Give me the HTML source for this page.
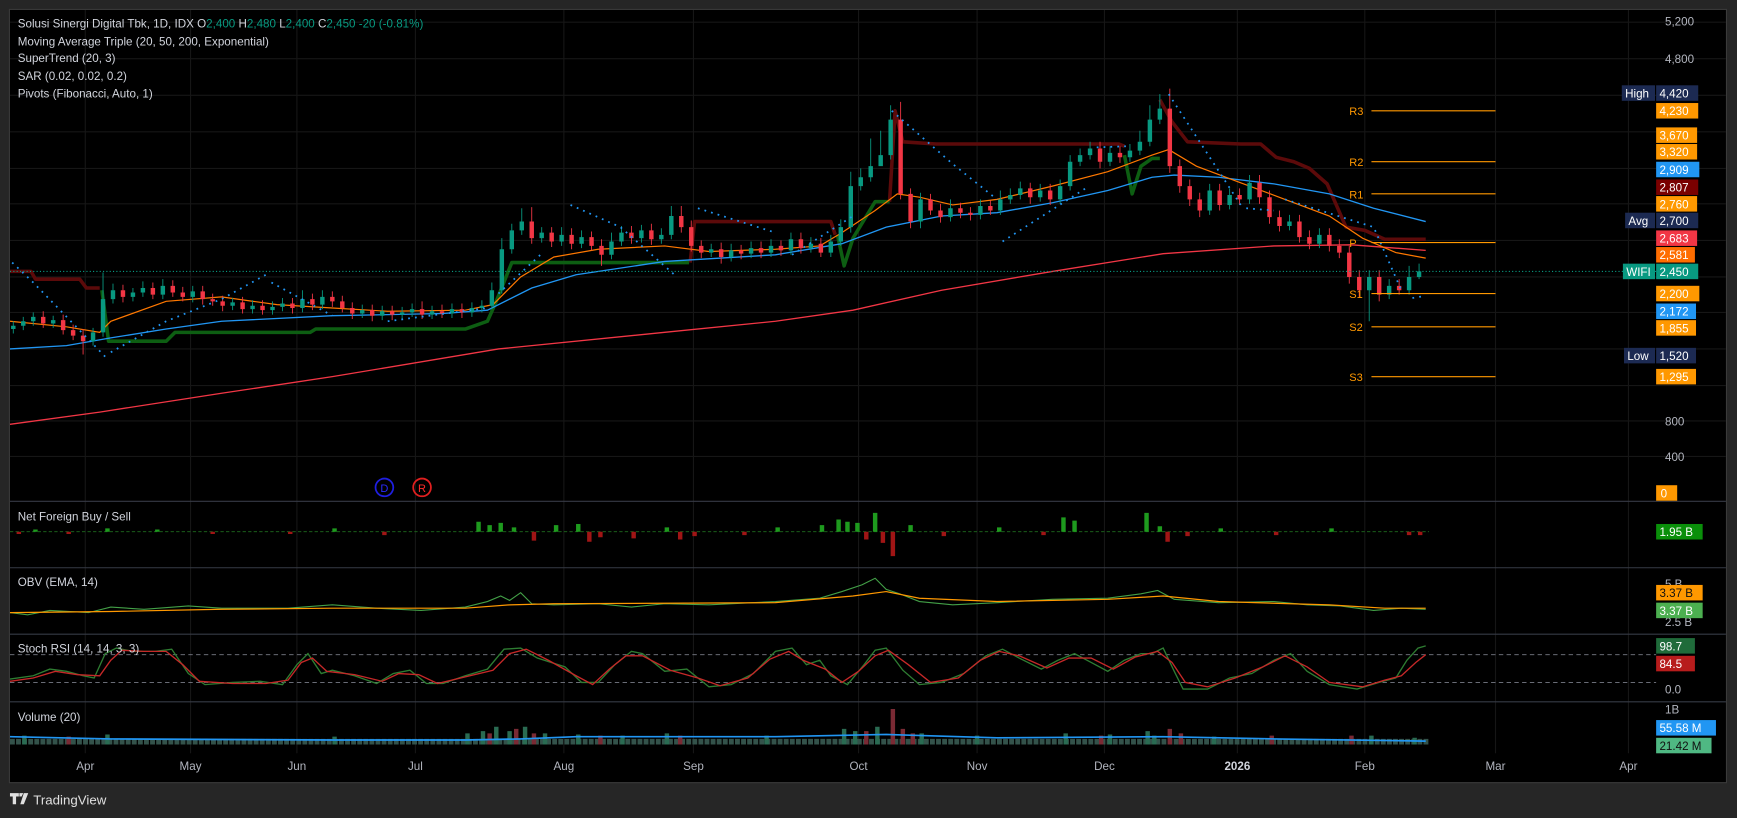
<!DOCTYPE html>
<html><head><meta charset="utf-8">
<style>
html,body{margin:0;padding:0;background:#262626;overflow:hidden}
svg{display:block}
text{font-family:"Liberation Sans",sans-serif}
</style></head>
<body>
<svg width="1737" height="818" viewBox="0 0 1568 738.4" preserveAspectRatio="none" xmlns="http://www.w3.org/2000/svg">
<rect x="0" y="0" width="1568" height="739" fill="#262626"/>
<rect x="8.5" y="8.5" width="1550" height="698" fill="#000" stroke="#3a3a3a" stroke-width="1"/>
<g stroke="#161616" stroke-width="1">
<path d="M77 9V680M172 9V680M268 9V680M375 9V680M509 9V680M626 9V680M775 9V680M882 9V680M997 9V680M1117 9V680M1232 9V680M1350 9V680M1470 9V680"/>
<path d="M9 20H1558M9 53H1558M9 86H1558M9 119H1558M9 152H1558M9 184H1558M9 217H1558M9 250H1558M9 282H1558M9 315H1558M9 348H1558M9 380H1558M9 412H1558"/>
</g>

<!-- EMA200 -->
<polyline points="9,383 90,372 200,355 300,340 450,315 600,300 700,290 770,280 850,262 950,245 1050,229 1150,222 1220,221 1287,226" fill="none" stroke="#f23645" stroke-width="1.2"/>
<!-- Supertrend -->
<g fill="none" stroke-width="3.2" stroke-linejoin="round">
<polyline stroke="#5c0a0a" points="9,245 28,245 32,252 72,252 78,260 90,260"/>
<polyline stroke="#5c0a0a" points="623,237 627,200 750,200 754,212"/>
<polyline stroke="#5c0a0a" points="803,182 808,100 815,128 845,130 1010,130 1015,132"/>
<polyline stroke="#5c0a0a" points="1047,90 1058,110 1072,128 1120,130 1138,130 1152,142 1168,146 1182,152 1198,166 1215,205 1232,208 1250,216 1287,216"/>
<polyline stroke="#0d5e12" points="92,262 98,308 150,308 158,300 280,300 285,297 420,297 440,290 448,272 462,237 622,237"/>
<polyline stroke="#0d5e12" points="756,212 762,240 770,215 790,182 803,182"/>
<polyline stroke="#0d5e12" points="1015,140 1022,175 1030,150 1040,143 1047,143"/>
</g>
<!-- EMAs -->
<polyline fill="none" stroke="#2196f3" stroke-width="1.2" points="9,315 60,312 100,305 150,297 200,290 300,285 400,283 440,280 480,260 520,248 600,236 700,230 760,220 800,205 850,195 900,192 950,183 1000,172 1040,160 1060,158 1100,160 1150,166 1200,175 1240,188 1287,200"/>
<polyline fill="none" stroke="#ff7800" stroke-width="1.1" points="9,290 60,295 90,300 100,290 150,272 200,268 250,275 300,278 350,281 420,280 445,275 470,250 500,232 540,225 600,222 640,227 700,225 740,222 760,210 790,190 810,175 830,178 860,185 900,180 950,168 1000,155 1040,140 1055,135 1080,150 1120,165 1160,180 1200,195 1230,215 1260,228 1287,233"/>

<!-- candles green -->
<g fill="#089981" stroke="#089981" stroke-width="0.8">
<path stroke="none" d="M10 294h4v3h-4zM19 290h4v4h-4zM28 286h4v4h-4zM46 289h4v3h-4zM82 300h4v8h-4zM91 270h4v30h-4zM100 262h4v8h-4zM118 264h4v4h-4zM127 260h4v4h-4zM145 258h4v8h-4zM172 263h4v5h-4zM208 273h4v3h-4zM226 276h4v3h-4zM244 277h4v3h-4zM253 274h4v3h-4zM271 270h4v8h-4zM289 268h4v7h-4zM325 280h4v3h-4zM343 281h4v4h-4zM361 282h4v2h-4zM370 279h4v3h-4zM388 281h4v3h-4zM406 279h4v4h-4zM424 278h4v4h-4zM433 276h4v2h-4zM442 262h4v14h-4zM451 225h4v37h-4zM460 208h4v17h-4zM469 200h4v8h-4zM487 210h4v5h-4zM505 212h4v6h-4zM523 214h4v6h-4zM550 218h4v12h-4zM559 210h4v8h-4zM577 208h4v7h-4zM595 212h4v4h-4zM604 195h4v17h-4zM640 225h4v3h-4zM658 226h4v6h-4zM676 224h4v5h-4zM694 222h4v6h-4zM712 216h4v10h-4zM730 220h4v4h-4zM748 218h4v10h-4zM757 205h4v13h-4zM766 168h4v37h-4zM775 160h4v8h-4zM784 150h4v10h-4zM793 140h4v10h-4zM802 108h4v32h-4zM829 180h4v20h-4zM856 188h4v8h-4zM883 186h4v8h-4zM901 180h4v10h-4zM910 176h4v4h-4zM919 170h4v6h-4zM937 172h4v6h-4zM955 168h4v12h-4zM964 146h4v22h-4zM973 140h4v6h-4zM982 134h4v6h-4zM1000 138h4v8h-4zM1018 136h4v6h-4zM1027 128h4v8h-4zM1036 108h4v20h-4zM1045 98h4v10h-4zM1090 172h4v18h-4zM1108 176h4v9h-4zM1126 165h4v15h-4zM1162 200h4v4h-4zM1189 212h4v8h-4zM1234 250h4v12h-4zM1252 258h4v8h-4zM1270 250h4v12h-4zM1279 245h4v5h-4z"/>
<path fill="none" d="M12 290V301M21 286V298M30 282V294M48 285V296M84 296V312M93 246V304M102 256V274M120 260V272M129 254V268M147 252V270M174 258V273M210 269V280M228 271V283M246 272V284M255 269V281M273 262V282M291 262V279M327 275V287M345 276V289M363 277V288M372 274V286M390 276V288M408 274V287M426 273V286M435 271V282M444 255V279M453 215V265M462 202V229M471 188V212M489 205V219M507 205V222M525 208V224M552 210V234M561 204V222M579 203V219M597 206V220M606 186V216M642 220V232M660 220V236M678 218V233M696 216V232M714 210V230M732 214V228M750 212V232M759 198V222M768 155V210M777 152V172M786 125V164M795 118V145M804 95V144M831 174V206M858 180V200M885 180V198M903 172V194M912 170V184M921 164V180M939 166V182M957 162V184M966 140V172M975 134V150M984 128V144M1002 132V150M1020 130V146M1029 118V140M1038 95V132M1047 85V112M1092 166V194M1110 170V189M1128 158V184M1164 194V208M1191 206V224M1236 244V290M1254 252V270M1272 240V266M1281 238V252"/>
</g>
<!-- candles red -->
<g fill="#f23645" stroke="#f23645" stroke-width="0.8">
<path stroke="none" d="M37 286h4v6h-4zM55 289h4v9h-4zM64 298h4v5h-4zM73 303h4v5h-4zM109 262h4v6h-4zM136 260h4v6h-4zM154 258h4v6h-4zM163 264h4v4h-4zM181 263h4v7h-4zM190 270h4v2h-4zM199 272h4v4h-4zM217 273h4v6h-4zM235 276h4v4h-4zM262 274h4v4h-4zM280 270h4v5h-4zM298 268h4v4h-4zM307 272h4v6h-4zM316 278h4v5h-4zM334 280h4v5h-4zM352 281h4v3h-4zM379 279h4v5h-4zM397 281h4v2h-4zM415 279h4v3h-4zM478 200h4v15h-4zM496 210h4v8h-4zM514 212h4v8h-4zM532 214h4v8h-4zM541 222h4v8h-4zM568 210h4v5h-4zM586 208h4v8h-4zM613 195h4v10h-4zM622 205h4v17h-4zM631 222h4v6h-4zM649 225h4v7h-4zM667 226h4v3h-4zM685 224h4v4h-4zM703 222h4v4h-4zM721 216h4v8h-4zM739 220h4v8h-4zM811 108h4v67h-4zM820 175h4v25h-4zM838 180h4v10h-4zM847 190h4v6h-4zM865 188h4v4h-4zM874 192h4v2h-4zM892 186h4v4h-4zM928 170h4v8h-4zM946 172h4v8h-4zM991 134h4v12h-4zM1009 138h4v4h-4zM1054 98h4v52h-4zM1063 150h4v18h-4zM1072 168h4v12h-4zM1081 180h4v10h-4zM1099 172h4v13h-4zM1117 176h4v4h-4zM1135 165h4v13h-4zM1144 178h4v18h-4zM1153 196h4v8h-4zM1171 200h4v14h-4zM1180 214h4v6h-4zM1198 212h4v10h-4zM1207 222h4v6h-4zM1216 228h4v22h-4zM1225 250h4v12h-4zM1243 250h4v16h-4zM1261 258h4v4h-4z"/>
<path fill="none" d="M39 281V296M57 284V302M66 293V307M75 297V320M111 257V273M138 255V270M156 253V268M165 259V272M183 258V275M192 265V276M201 267V281M219 268V283M237 271V284M264 269V283M282 265V280M300 263V277M309 267V282M318 273V288M336 275V290M354 276V289M381 272V288M399 275V287M417 274V287M480 187V220M498 205V223M516 206V225M534 209V226M543 216V240M570 204V220M588 202V221M615 186V210M624 199V227M633 217V233M651 219V238M669 221V234M687 218V233M705 217V231M723 210V229M741 215V232M813 92V180M822 170V206M840 175V194M849 184V201M867 183V197M876 187V199M894 181V194M930 165V184M948 166V185M993 128V152M1011 132V147M1056 80V156M1065 144V174M1074 162V186M1083 174V196M1101 166V190M1119 170V185M1137 158V184M1146 172V202M1155 190V209M1173 194V219M1182 208V225M1200 206V227M1209 216V233M1218 222V256M1227 244V268M1245 244V272M1263 252V266"/>
</g>

<!-- SAR dots -->
<g fill="none" stroke="#2196f3" stroke-width="1.6" stroke-dasharray="1.6,4.6">
<polyline points="11,237 30,255 95,322"/>
<polyline points="100,318 150,290 200,270 240,248"/>
<polyline points="245,255 300,285"/>
<polyline points="350,290 440,278"/>
<polyline points="450,265 490,228"/>
<polyline points="515,185 560,205 610,249"/>
<polyline points="630,188 700,210"/>
<polyline points="715,230 770,195"/>
<polyline points="805,100 860,148 900,180"/>
<polyline points="905,218 980,170"/>
<polyline points="990,133 1018,132"/>
<polyline points="1055,85 1120,185"/>
<polyline points="1125,188 1150,190"/>
<polyline points="1160,180 1240,205 1265,262"/>
<polyline points="1275,269 1287,267"/>
</g>

<!-- pivots -->
<g stroke="#ff9800" stroke-width="1">
<path d="M1238 100H1350M1238 146H1350M1238 175H1350M1238 219H1350M1238 265H1350M1238 295H1350M1238 340H1350"/>
</g>
<g font-size="10" fill="#ff9800">
<text x="1218" y="104">R3</text><text x="1218" y="150">R2</text><text x="1218" y="179">R1</text><text x="1218" y="223">P</text><text x="1218" y="269">S1</text><text x="1218" y="299">S2</text><text x="1218" y="344">S3</text>
</g>
<line x1="9" y1="245" x2="1495" y2="245" stroke="#089981" stroke-width="1" stroke-dasharray="1,2"/>

<!-- NFBS -->
<line x1="9" y1="480" x2="1290" y2="480" stroke="#1d6b1d" stroke-width="0.8" stroke-dasharray="3,2"/>
<g fill="#1e9a1e">
<path d="M30 478h4v2h-4zM95 477h4v3h-4zM140 478h4v2h-4zM300 477h4v3h-4zM430 471h4v9h-4zM440 474h4v6h-4zM450 472h4v8h-4zM462 476h4v4h-4zM500 474h4v6h-4zM520 473h4v7h-4zM600 476h4v4h-4zM700 476h4v4h-4zM740 474h4v6h-4zM755 469h4v11h-4zM763 471h4v9h-4zM772 472h4v8h-4zM788 463h4v17h-4zM820 474h4v6h-4zM900 476h4v4h-4zM958 467h4v13h-4zM968 470h4v10h-4zM1033 463h4v17h-4zM1045 475h4v5h-4zM1100 477h4v3h-4zM1200 477h4v3h-4z"/>
</g>
<g fill="#a01515">
<path d="M15 480h4v2h-4zM60 480h4v2h-4zM190 480h4v2h-4zM260 480h4v2h-4zM345 480h4v3h-4zM480 480h4v8h-4zM530 480h4v9h-4zM540 480h4v5h-4zM570 480h4v6h-4zM612 480h4v7h-4zM625 480h4v4h-4zM670 480h4v3h-4zM780 480h4v7h-4zM795 480h4v10h-4zM804 480h4v22h-4zM850 480h4v4h-4zM940 480h4v3h-4zM1052 480h4v9h-4zM1070 480h4v4h-4zM1150 480h4v3h-4zM1270 480h4v3h-4zM1280 480h4v3h-4z"/>
</g>

<!-- OBV -->
<polyline fill="none" stroke="#43a047" stroke-width="1" points="9,553 25,555 45,551 80,553 100,548 130,550 170,547 200,549 260,549 300,546 340,549 380,551 420,548 440,543 452,538 460,542 470,535 480,545 500,546 540,545 570,548 600,545 640,546 700,543 740,540 760,534 778,528 790,522 800,532 812,536 830,543 860,546 900,544 950,541 1000,540 1030,536 1045,533 1060,541 1100,544 1150,543 1180,546 1210,547 1240,551 1265,549 1287,550"/>
<polyline fill="none" stroke="#ff9800" stroke-width="1.1" points="9,553 100,552 200,550 300,549 420,549 460,546 500,545 700,544 770,538 800,534 830,540 900,543 1000,541 1050,538 1100,543 1200,546 1250,549 1287,549"/>

<!-- Stoch -->
<g stroke="#787b86" stroke-width="0.8" stroke-dasharray="4,3"><path d="M9 591H1495M9 616H1495"/></g>
<polyline fill="none" stroke="#2e7d32" stroke-width="1.2" points="9,613 30,610 45,604 60,606 75,610 85,612 95,590 105,585 120,588 140,588 155,586 170,608 185,618 210,616 235,615 255,618 268,600 278,590 290,608 300,605 320,610 340,617 355,608 370,605 385,617 400,617 420,610 440,604 455,586 470,585 485,594 510,602 525,616 540,616 555,600 570,588 580,590 600,606 620,604 640,620 660,618 680,608 700,588 715,585 728,600 740,596 750,610 765,618 780,600 790,587 800,585 815,605 830,618 850,616 870,608 890,592 905,586 920,594 940,604 955,596 970,590 985,598 1000,606 1015,596 1030,590 1040,590 1050,585 1060,606 1068,622 1090,622 1110,612 1130,608 1150,596 1165,590 1180,606 1200,618 1225,622 1245,616 1260,612 1270,596 1280,585 1287,583"/>
<polyline fill="none" stroke="#c62828" stroke-width="1.2" points="9,615 30,612 50,606 70,609 90,610 100,596 110,587 130,588 150,588 165,600 180,615 210,617 240,617 260,614 272,598 282,594 295,606 320,609 345,615 360,608 378,609 395,617 420,611 445,605 460,590 475,586 495,596 520,610 535,618 550,604 565,592 580,592 605,605 630,612 650,619 675,612 695,595 712,588 725,596 745,604 760,616 775,606 790,592 802,587 820,600 840,616 865,612 885,596 902,588 920,592 945,603 965,594 985,594 1005,604 1025,593 1045,588 1058,598 1070,616 1090,620 1115,612 1140,602 1160,592 1180,602 1200,616 1230,620 1250,614 1265,610 1278,598 1287,591"/>

<!-- Volume -->
<line x1="9" y1="669.5" x2="1290" y2="669.5" stroke="#33524a" stroke-width="5" stroke-dasharray="4.4,1.1"/>
<g fill="#2a6b52">
<path d="M20 664h4v8h-4zM95 663h4v9h-4zM300 665h4v7h-4zM420 662h4v10h-4zM434 660h4v12h-4zM446 656h4v16h-4zM458 660h4v12h-4zM472 656h4v16h-4zM490 662h4v10h-4zM520 663h4v9h-4zM560 664h4v8h-4zM600 662h4v10h-4zM690 664h4v8h-4zM760 658h4v14h-4zM770 660h4v12h-4zM790 656h4v16h-4zM830 662h4v10h-4zM880 664h4v8h-4zM960 662h4v10h-4zM1000 663h4v9h-4zM1034 660h4v12h-4zM1040 664h4v8h-4zM1094 665h4v7h-4zM1236 664h4v8h-4zM1275 666h4v6h-4z"/>
</g>
<g fill="#7a2a34">
<path d="M60 665h4v7h-4zM440 662h4v10h-4zM464 658h4v14h-4zM480 662h4v10h-4zM540 664h4v8h-4zM612 664h4v8h-4zM780 660h4v12h-4zM804 640h4v32h-4zM813 658h4v14h-4zM822 662h4v10h-4zM992 664h4v8h-4zM1054 658h4v14h-4zM1064 662h4v10h-4zM1146 664h4v8h-4zM1218 664h4v8h-4z"/>
</g>
<polyline fill="none" stroke="#2196f3" stroke-width="1.5" points="9,665 100,667 300,668 420,668 470,667 520,665 700,665 800,663 900,666 1050,665 1150,667 1287,669"/>

<!-- pane separators -->
<g stroke="#363a45" stroke-width="1">
<path d="M9 452.5H1558M9 512.5H1558M9 572.5H1558M9 633.5H1558"/>
</g>
<!-- legend -->
<g font-size="10.5" fill="#d1d4dc">
<text x="16" y="25">Solusi Sinergi Digital Tbk, 1D, IDX  O<tspan fill="#089981">2,400</tspan>  H<tspan fill="#089981">2,480</tspan>  L<tspan fill="#089981">2,400</tspan>  C<tspan fill="#089981">2,450  -20 (-0.81%)</tspan></text>
<text x="16" y="41">Moving Average Triple (20, 50, 200, Exponential)</text>
<text x="16" y="56">SuperTrend (20, 3)</text>
<text x="16" y="72">SAR (0.02, 0.02, 0.2)</text>
<text x="16" y="88">Pivots (Fibonacci, Auto, 1)</text>
<text x="16" y="470">Net Foreign Buy / Sell</text>
<text x="16" y="529">OBV (EMA, 14)</text>
<text x="16" y="589">Stoch RSI (14, 14, 3, 3)</text>
<text x="16" y="651">Volume (20)</text>
</g>
<g font-size="10.5" fill="#b2b5be">
<text x="1503" y="23">5,200</text><text x="1503" y="57">4,800</text><text x="1503" y="384">800</text><text x="1503" y="416">400</text>
<text x="1503" y="531">5 B</text><text x="1503" y="565">2.5 B</text><text x="1503" y="626">0.0</text><text x="1503" y="644">1B</text>
</g>
<g font-size="10.5" fill="#b2b5be" text-anchor="middle">
<text x="77" y="695">Apr</text><text x="172" y="695">May</text><text x="268" y="695">Jun</text><text x="375" y="695">Jul</text><text x="509" y="695">Aug</text><text x="626" y="695">Sep</text><text x="775" y="695">Oct</text><text x="882" y="695">Nov</text><text x="997" y="695">Dec</text><text x="1117" y="695" font-weight="bold" fill="#d1d4dc">2026</text><text x="1232" y="695">Feb</text><text x="1350" y="695">Mar</text><text x="1470" y="695">Apr</text>
</g>

<!-- badges -->
<g>
<rect x="1464" y="77" width="30" height="14" fill="#1c2a52"/><rect x="1495" y="77" width="38" height="14" fill="#1c2a52"/>
<rect x="1495" y="93" width="38" height="14" fill="#ff9800"/>
<rect x="1495" y="115" width="37" height="14" fill="#ff9800"/><rect x="1495" y="130" width="37" height="14" fill="#ff9800"/>
<rect x="1495" y="146" width="39" height="14" fill="#2196f3"/><rect x="1495" y="162" width="38" height="14" fill="#7a0000"/>
<rect x="1495" y="177" width="37" height="14" fill="#ff9800"/>
<rect x="1467" y="192" width="27" height="14" fill="#1c2a52"/><rect x="1495" y="192" width="38" height="14" fill="#1c2a52"/>
<rect x="1495" y="208" width="37" height="14" fill="#f23645"/><rect x="1495" y="223" width="35" height="14" fill="#ff6d00"/>
<rect x="1465" y="238" width="29" height="14" fill="#089981"/><rect x="1495" y="238" width="38" height="14" fill="#089981"/>
<rect x="1495" y="258" width="39" height="14" fill="#ff9800"/><rect x="1495" y="274" width="36" height="14" fill="#2196f3"/>
<rect x="1495" y="289" width="36" height="14" fill="#ff9800"/>
<rect x="1466" y="314" width="28" height="14" fill="#1c2a52"/><rect x="1495" y="314" width="36" height="14" fill="#1c2a52"/>
<rect x="1495" y="333" width="36" height="14" fill="#ff9800"/>
<rect x="1495" y="438" width="19" height="14" fill="#ff9800"/>
<rect x="1495" y="473" width="42" height="14" fill="#0a8f0a"/>
<rect x="1495" y="528" width="42" height="14" fill="#ff9800"/><rect x="1495" y="544" width="42" height="14" fill="#4caf50"/>
<rect x="1495" y="576" width="35" height="14" fill="#1f6b3a"/><rect x="1495" y="592" width="35" height="14" fill="#b71c1c"/>
<rect x="1495" y="650" width="54" height="14" fill="#2196f3"/><rect x="1495" y="666" width="50" height="14" fill="#4fb883"/>
</g>
<g font-size="10.5" fill="#fff">
<text x="1467" y="88">High</text><text x="1498" y="88">4,420</text>
<text x="1498" y="104">4,230</text><text x="1498" y="126">3,670</text><text x="1498" y="141">3,320</text>
<text x="1498" y="157">2,909</text><text x="1498" y="173">2,807</text><text x="1498" y="188">2,760</text>
<text x="1470" y="203">Avg</text><text x="1498" y="203">2,700</text>
<text x="1498" y="219">2,683</text><text x="1498" y="234">2,581</text>
<text x="1468" y="249">WIFI</text><text x="1498" y="249">2,450</text>
<text x="1498" y="269">2,200</text><text x="1498" y="285">2,172</text><text x="1498" y="300">1,855</text>
<text x="1469" y="325">Low</text><text x="1498" y="325">1,520</text>
<text x="1498" y="344">1,295</text>
<text x="1499" y="449">0</text>
<text x="1498" y="484">1.95 B</text>
<text x="1498" y="539" fill="#111">3.37 B</text><text x="1498" y="555">3.37 B</text>
<text x="1498" y="587">98.7</text><text x="1498" y="603">84.5</text>
<text x="1498" y="661">55.58 M</text><text x="1498" y="677" fill="#111">21.42 M</text>
</g>

<!-- D R markers -->
<circle cx="347" cy="440" r="8" fill="none" stroke="#1f1fe0" stroke-width="1.6"/>
<text x="347" y="444" font-size="10" fill="#2a2aff" text-anchor="middle">D</text>
<circle cx="381" cy="440" r="8" fill="none" stroke="#e01f1f" stroke-width="1.6"/>
<text x="381" y="444" font-size="10" fill="#ff2a2a" text-anchor="middle">R</text>
<!-- footer -->
<path fill="#e0e0e0" d="M9 716h8v3h-2.5v7h-3v-7H9z M17.5 716h3.5l-1.5 3h-2z M21.5 716h4l-4 10h-3.2z"/>
<text x="30" y="726" font-size="12" fill="#e0e0e0">TradingView</text>
</svg>
</body></html>
